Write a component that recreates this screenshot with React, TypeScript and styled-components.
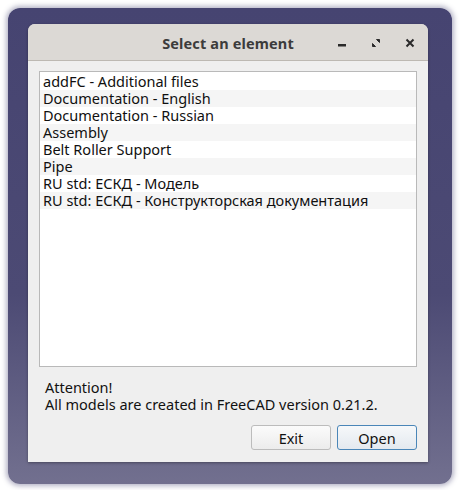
import React from "react";
import styled, { createGlobalStyle } from "styled-components";

const Global = createGlobalStyle`
  html, body { margin: 0; padding: 0; background: #ffffff; }
  body { width: 460px; height: 490px; overflow: hidden; font-family: "Noto Sans", "Liberation Sans", sans-serif; }
`;

const Page = styled.div`
  padding: 8px 8px 6px 8px;
  width: 460px;
  height: 490px;
  box-sizing: border-box;
`;

const Desk = styled.div`
  background: linear-gradient(180deg, #464471 0%, #4c4a74 60%, #72708f 100%);
  border-radius: 12px;
  box-shadow: 0 0 5px 2px rgba(90, 88, 130, 0.45);
  padding: 16px 24px 22px 20px;
  height: 476px;
  box-sizing: border-box;
`;

const Window = styled.div`
  width: 400px;
  height: 438px;
  background: #efefef;
  border-radius: 7px 7px 0 0;
  display: flex;
  flex-direction: column;
  overflow: hidden;
  box-shadow: 0 1px 3px rgba(0, 0, 0, 0.35);
`;

const TitleBar = styled.div`
  height: 36px;
  flex: none;
  background: #dcd9d5;
  border-bottom: 1px solid #bdb9b3;
  display: grid;
  grid-template-columns: 1fr auto 1fr;
  align-items: center;
`;

const Title = styled.div`
  grid-column: 2;
  font-family: "Noto Sans", sans-serif;
  font-weight: 700;
  font-size: 14.5px;
  color: #3c3c3c;
  letter-spacing: 0.15px;
  padding-top: 1px;
`;

const Controls = styled.div`
  grid-column: 3;
  justify-self: end;
  display: flex;
  align-items: center;
  padding-right: 1px;
  padding-top: 2px;
`;

const Ctl = styled.div`
  width: 34px;
  height: 20px;
  display: flex;
  align-items: center;
  justify-content: center;
`;

const Body = styled.div`
  flex: 1;
  display: flex;
  flex-direction: column;
  padding: 10px 11px 12px 11px;
`;

const List = styled.div`
  height: 296px;
  flex: none;
  background: #ffffff;
  border: 1px solid #b9b9b9;
  box-sizing: border-box;
  padding-top: 1px;
`;

const Row = styled.div<{ $alt: boolean }>`
  height: 17px;
  line-height: 17px;
  padding-left: 3px;
  font-size: 14.5px;
  color: #101010;
  white-space: nowrap;
  background: ${(p) => (p.$alt ? "#f5f5f5" : "#ffffff")};
`;

const Note = styled.div`
  margin-top: 12px;
  padding-left: 6px;
  font-size: 14.5px;
  line-height: 17px;
  color: #111111;
`;

const Buttons = styled.div`
  margin-top: 12px;
  display: flex;
  justify-content: flex-end;
  gap: 6px;
`;

const Button = styled.button<{ $default?: boolean }>`
  width: 80px;
  height: 25px;
  font-family: "Noto Sans", sans-serif;
  font-size: 14.5px;
  color: #111111;
  border-radius: 3px;
  border: 1px solid ${(p) => (p.$default ? "#4a86b8" : "#bcbcbc")};
  background: ${(p) =>
    p.$default
      ? "linear-gradient(180deg, #f6f8fa 0%, #e3e9ef 100%)"
      : "linear-gradient(180deg, #fbfbfb 0%, #ececec 100%)"};
  padding: 0;
`;

const items = [
  "addFC - Additional files",
  "Documentation - English",
  "Documentation - Russian",
  "Assembly",
  "Belt Roller Support",
  "Pipe",
  "RU std: ЕСКД - Модель",
  "RU std: ЕСКД - Конструкторская документация",
];

export default function App() {
  return (
    <>
      <Global />
      <Page>
        <Desk>
          <Window>
            <TitleBar>
              <Title>Select an element</Title>
              <Controls>
                <Ctl>
                  <svg width="10" height="10" viewBox="0 0 10 10">
                    <rect x="1" y="6" width="8" height="2.5" fill="#2a2a2a" />
                  </svg>
                </Ctl>
                <Ctl>
                  <svg width="10" height="10" viewBox="0 0 10 10">
                    <path d="M5.5 1.5h3v3z" fill="#2a2a2a" stroke="#2a2a2a" strokeWidth="1" />
                    <path d="M1.5 5.5v3h3z" fill="#2a2a2a" stroke="#2a2a2a" strokeWidth="1" />
                  </svg>
                </Ctl>
                <Ctl>
                  <svg width="10" height="10" viewBox="0 0 10 10">
                    <path d="M1.5 1.5l7 7M8.5 1.5l-7 7" stroke="#2a2a2a" strokeWidth="2" />
                  </svg>
                </Ctl>
              </Controls>
            </TitleBar>
            <Body>
              <List>
                {items.map((t, i) => (
                  <Row key={t} $alt={i % 2 === 1}>
                    {t}
                  </Row>
                ))}
              </List>
              <Note>
                Attention!
                <br />
                All models are created in FreeCAD version 0.21.2.
              </Note>
              <Buttons>
                <Button>Exit</Button>
                <Button $default>Open</Button>
              </Buttons>
            </Body>
          </Window>
        </Desk>
      </Page>
    </>
  );
}
